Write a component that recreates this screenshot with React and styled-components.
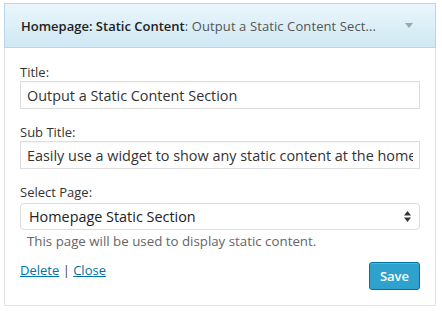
import React from 'react';
import styled, { createGlobalStyle } from 'styled-components';

const GlobalStyle = createGlobalStyle`
  html, body {
    margin: 0;
    padding: 0;
    background: #fff;
  }
  body {
    font-family: "Open Sans", "Liberation Sans", sans-serif;
    color: #333;
  }
`;

const Page = styled.div`
  padding: 3px 0 0 4px;
`;

const Widget = styled.div`
  width: 432px;
  box-sizing: border-box;
  border: 1px solid #e5e5e5;
  background: #fff;
`;

const Header = styled.div`
  display: flex;
  align-items: center;
  justify-content: space-between;
  height: 45px;
  box-sizing: border-box;
  margin: -1px -1px 0;
  padding: 0 22px 0 16px;
  border: 1px solid #b7d6e7;
  background: linear-gradient(to bottom, #eaf6fc, #cfe8f3);
`;

const Heading = styled.h4`
  margin: 0;
  font-size: 13px;
  font-weight: 600;
  color: #222;
  white-space: nowrap;
`;

const InTitle = styled.span`
  font-weight: 400;
  color: #555;
  letter-spacing: 0.1px;
`;

const Toggle = styled.svg`
  display: block;
`;

const Body = styled.div`
  padding: 15px 15px 15px 15px;
`;

const Field = styled.div`
  margin-bottom: ${p => p.$gap ?? 14}px;
`;

const Label = styled.label`
  display: block;
  font-size: 13px;
  line-height: 18px;
  color: #333;
  margin-bottom: ${p => p.$gap || 0}px;
`;

const Input = styled.input`
  display: block;
  width: 100%;
  height: 28px;
  box-sizing: border-box;
  margin: 0;
  padding: 0 6px;
  border: 1px solid #ddd;
  border-radius: 0;
  font-family: inherit;
  font-size: 14.4px;
  color: #333;
  background: #fff;
  outline: none;
  box-shadow: inset 0 1px 2px rgba(0, 0, 0, 0.04);
`;

const SelectBox = styled.div`
  display: flex;
  align-items: center;
  justify-content: space-between;
  height: 27px;
  box-sizing: border-box;
  padding: 0 8px 0 8px;
  border: 1px solid #ddd;
  border-radius: 4px;
  font-size: 14.4px;
  color: #222;
  background: #fff;
`;

const Note = styled.p`
  margin: 2px 0 0;
  padding-left: 7px;
  font-size: 13.3px;
  line-height: 18px;
  color: #666;
`;

const Footer = styled.div`
  display: flex;
  justify-content: space-between;
  align-items: flex-start;
  margin-top: 11px;
`;

const Links = styled.div`
  font-size: 13px;
  line-height: 18px;
  color: #444;
`;

const Link = styled.a`
  color: #0074a2;
  text-decoration: underline;
`;

const Save = styled.button`
  height: 28px;
  padding: 0 10px;
  margin-top: 1px;
  border: 1px solid #0074a2;
  border-radius: 3px;
  background: #2ea2cc;
  color: #fff;
  font-family: inherit;
  font-size: 13px;
  font-weight: 600;
  box-shadow: inset 0 1px 0 rgba(120, 200, 230, 0.5);
`;

const App = () => (
  <Page>
    <GlobalStyle />
    <Widget>
      <Header>
        <Heading>
          Homepage: Static Content<InTitle>: Output a Static Content Sect...</InTitle>
        </Heading>
        <Toggle width="8" height="5" viewBox="0 0 8 5">
          <path d="M0 0h8L4 5z" fill="#a0a5aa" />
        </Toggle>
      </Header>
      <Body>
        <Field>
          <Label>Title:</Label>
          <Input defaultValue="Output a Static Content Section" />
        </Field>
        <Field>
          <Label>Sub Title:</Label>
          <Input defaultValue="Easily use a widget to show any static content at the homepage" />
        </Field>
        <Field $gap={0}>
          <Label $gap={2}>Select Page:</Label>
          <SelectBox>
            <span>Homepage Static Section</span>
            <svg width="7" height="11" viewBox="0 0 7 11">
              <path d="M3.5 0L7 4.5H0z M3.5 11L0 6.5h7z" fill="#333" />
            </svg>
          </SelectBox>
          <Note>This page will be used to display static content.</Note>
        </Field>
        <Footer>
          <Links>
            <Link href="#delete">Delete</Link> | <Link href="#close">Close</Link>
          </Links>
          <Save>Save</Save>
        </Footer>
      </Body>
    </Widget>
  </Page>
);

export default App;
